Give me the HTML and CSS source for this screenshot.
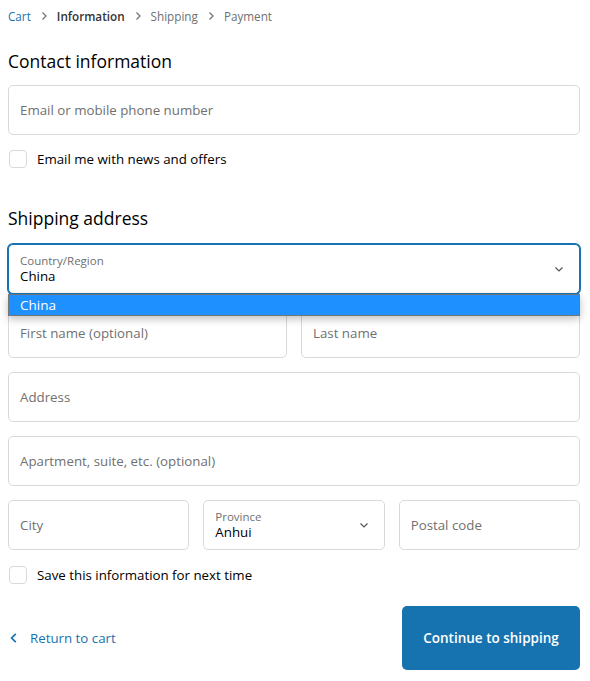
FILE: index.html
```html
<!DOCTYPE html>
<html lang="en">
<head>
  <meta charset="UTF-8">
  <meta name="viewport" content="width=device-width, initial-scale=1.0">
  <title>Checkout - Information</title>
  <link rel="stylesheet" href="styles.css">
</head>
<body>
  <div class="checkout">
    <!-- Breadcrumb -->
    <nav class="breadcrumb">
      <a href="#" class="crumb crumb-link">Cart</a>
      <svg class="crumb-sep" viewBox="0 0 10 10"><path d="M3.5 1.5 L7 5 L3.5 8.5" /></svg>
      <span class="crumb crumb-current">Information</span>
      <svg class="crumb-sep" viewBox="0 0 10 10"><path d="M3.5 1.5 L7 5 L3.5 8.5" /></svg>
      <span class="crumb">Shipping</span>
      <svg class="crumb-sep" viewBox="0 0 10 10"><path d="M3.5 1.5 L7 5 L3.5 8.5" /></svg>
      <span class="crumb">Payment</span>
    </nav>

    <!-- Contact information -->
    <section class="section">
      <h2 class="section-title contact-title">Contact information</h2>
      <div class="field">
        <span class="placeholder">Email or mobile phone number</span>
      </div>
      <label class="check-row">
        <span class="checkbox"></span>
        <span>Email me with news and offers</span>
      </label>
    </section>

    <!-- Shipping address -->
    <section class="section">
      <h2 class="section-title shipping-title">Shipping address</h2>
      <div class="form-rows">
        <div class="select-wrap">
          <div class="field field-select field-focus">
            <div class="select-value">
              <span class="float-label">Country/Region</span>
              <span class="value">China</span>
            </div>
            <svg class="select-arrow" viewBox="0 0 10 10"><path d="M1.5 3.5 L5 7 L8.5 3.5" /></svg>
          </div>
          <!-- open native dropdown -->
          <div class="dropdown">
            <div class="dropdown-option">China</div>
          </div>
        </div>

        <div class="row row-2">
          <div class="field"><span class="placeholder">First name (optional)</span></div>
          <div class="field"><span class="placeholder">Last name</span></div>
        </div>

        <div class="field"><span class="placeholder">Address</span></div>
        <div class="field"><span class="placeholder">Apartment, suite, etc. (optional)</span></div>

        <div class="row row-3">
          <div class="field"><span class="placeholder">City</span></div>
          <div class="field field-select">
            <div class="select-value">
              <span class="float-label">Province</span>
              <span class="value">Anhui</span>
            </div>
            <svg class="select-arrow" viewBox="0 0 10 10"><path d="M1.5 3.5 L5 7 L8.5 3.5" /></svg>
          </div>
          <div class="field"><span class="placeholder">Postal code</span></div>
        </div>
      </div>

      <label class="check-row save-row">
        <span class="checkbox"></span>
        <span>Save this information for next time</span>
      </label>
    </section>

    <!-- Footer actions -->
    <div class="actions">
      <a href="#" class="return-link">
        <svg class="return-icon" viewBox="0 0 10 10"><path d="M6.5 1.5 L3 5 L6.5 8.5" /></svg>
        Return to cart
      </a>
      <button class="continue-btn">Continue to shipping</button>
    </div>
  </div>
</body>
</html>
```

FILE: styles.css
```css
body {
  margin: 0;
  padding: 0;
  background: #fff;
  font-family: "Open Sans", "Noto Sans", Arial, sans-serif;
  color: #333;
}

.checkout {
  width: 572px;
  margin-left: 8px;
}

/* Breadcrumb */
.breadcrumb {
  display: flex;
  align-items: center;
  gap: 8px;
  height: 32px;
  font-size: 11.7px;
}

.crumb {
  color: #707070;
}

.crumb-link {
  color: #1773b0;
  text-decoration: none;
}

.crumb-current {
  color: #333;
  font-weight: 600;
}

.crumb-sep {
  width: 10px;
  height: 10px;
  fill: none;
  stroke: #707070;
  stroke-width: 1.2;
}

/* Sections */
.section-title {
  margin: 0;
  font-size: 17.5px;
  font-weight: 400;
  color: #000;
}

.contact-title {
  padding-top: 16px;
  line-height: 26px;
  margin-bottom: 11px;
}

.shipping-title {
  padding-top: 37px;
  line-height: 26px;
  margin-bottom: 13px;
}

/* Fields */
.field {
  box-sizing: border-box;
  height: 50px;
  border: 1px solid #d9d9d9;
  border-radius: 5px;
  display: flex;
  align-items: center;
  padding: 0 11px;
  font-size: 13.3px;
  background: #fff;
}

.placeholder {
  color: #707070;
}

.field-select {
  justify-content: space-between;
}

.field-focus {
  border-color: #1773b0;
  box-shadow: 0 0 0 1px #1773b0;
}

.select-value {
  display: flex;
  flex-direction: column;
  padding-bottom: 1px;
}

.float-label {
  font-size: 11.5px;
  color: #707070;
  line-height: 15px;
}

.value {
  color: #000;
  line-height: 17px;
}

.select-arrow {
  width: 10px;
  height: 10px;
  fill: none;
  stroke: #555;
  stroke-width: 1.2;
  margin-right: 4px;
}

.form-rows {
  display: flex;
  flex-direction: column;
  gap: 14px;
}

.row {
  display: grid;
  gap: 14px;
}

.row-2 {
  grid-template-columns: 1fr 1fr;
}

.row-3 {
  grid-template-columns: 1fr 1fr 1fr;
}

/* Open dropdown overlay */
.select-wrap {
  position: relative;
}

.dropdown {
  position: absolute;
  left: 0;
  right: 0;
  top: 50px;
  z-index: 10;
  background: #fff;
  border: 1px solid #767676;
  box-shadow: 0 3px 8px rgba(0, 0, 0, 0.25);
}

.dropdown-option {
  background: #1e90ff;
  color: #fff;
  font-size: 13.5px;
  line-height: 20px;
  padding-left: 11px;
}

/* Checkboxes */
.check-row {
  display: flex;
  align-items: center;
  gap: 10px;
  font-size: 13.3px;
  line-height: 18px;
  color: #000;
  margin-top: 15px;
  margin-left: 1px;
}

.checkbox {
  box-sizing: border-box;
  width: 18px;
  height: 18px;
  border: 1px solid #d9d9d9;
  border-radius: 4px;
}

.save-row {
  margin-top: 16px;
}

/* Footer */
.actions {
  display: flex;
  justify-content: space-between;
  align-items: center;
  margin-top: 22px;
}

.return-link {
  display: flex;
  align-items: center;
  gap: 10px;
  color: #1773b0;
  text-decoration: none;
  font-size: 13.3px;
}

.return-icon {
  width: 12px;
  height: 12px;
  fill: none;
  stroke: #1773b0;
  stroke-width: 1.4;
}

.continue-btn {
  width: 178px;
  height: 64px;
  border: none;
  border-radius: 5px;
  background: #1773b0;
  color: #fff;
  font-family: inherit;
  font-size: 13.5px;
  font-weight: 600;
  cursor: pointer;
}
```
